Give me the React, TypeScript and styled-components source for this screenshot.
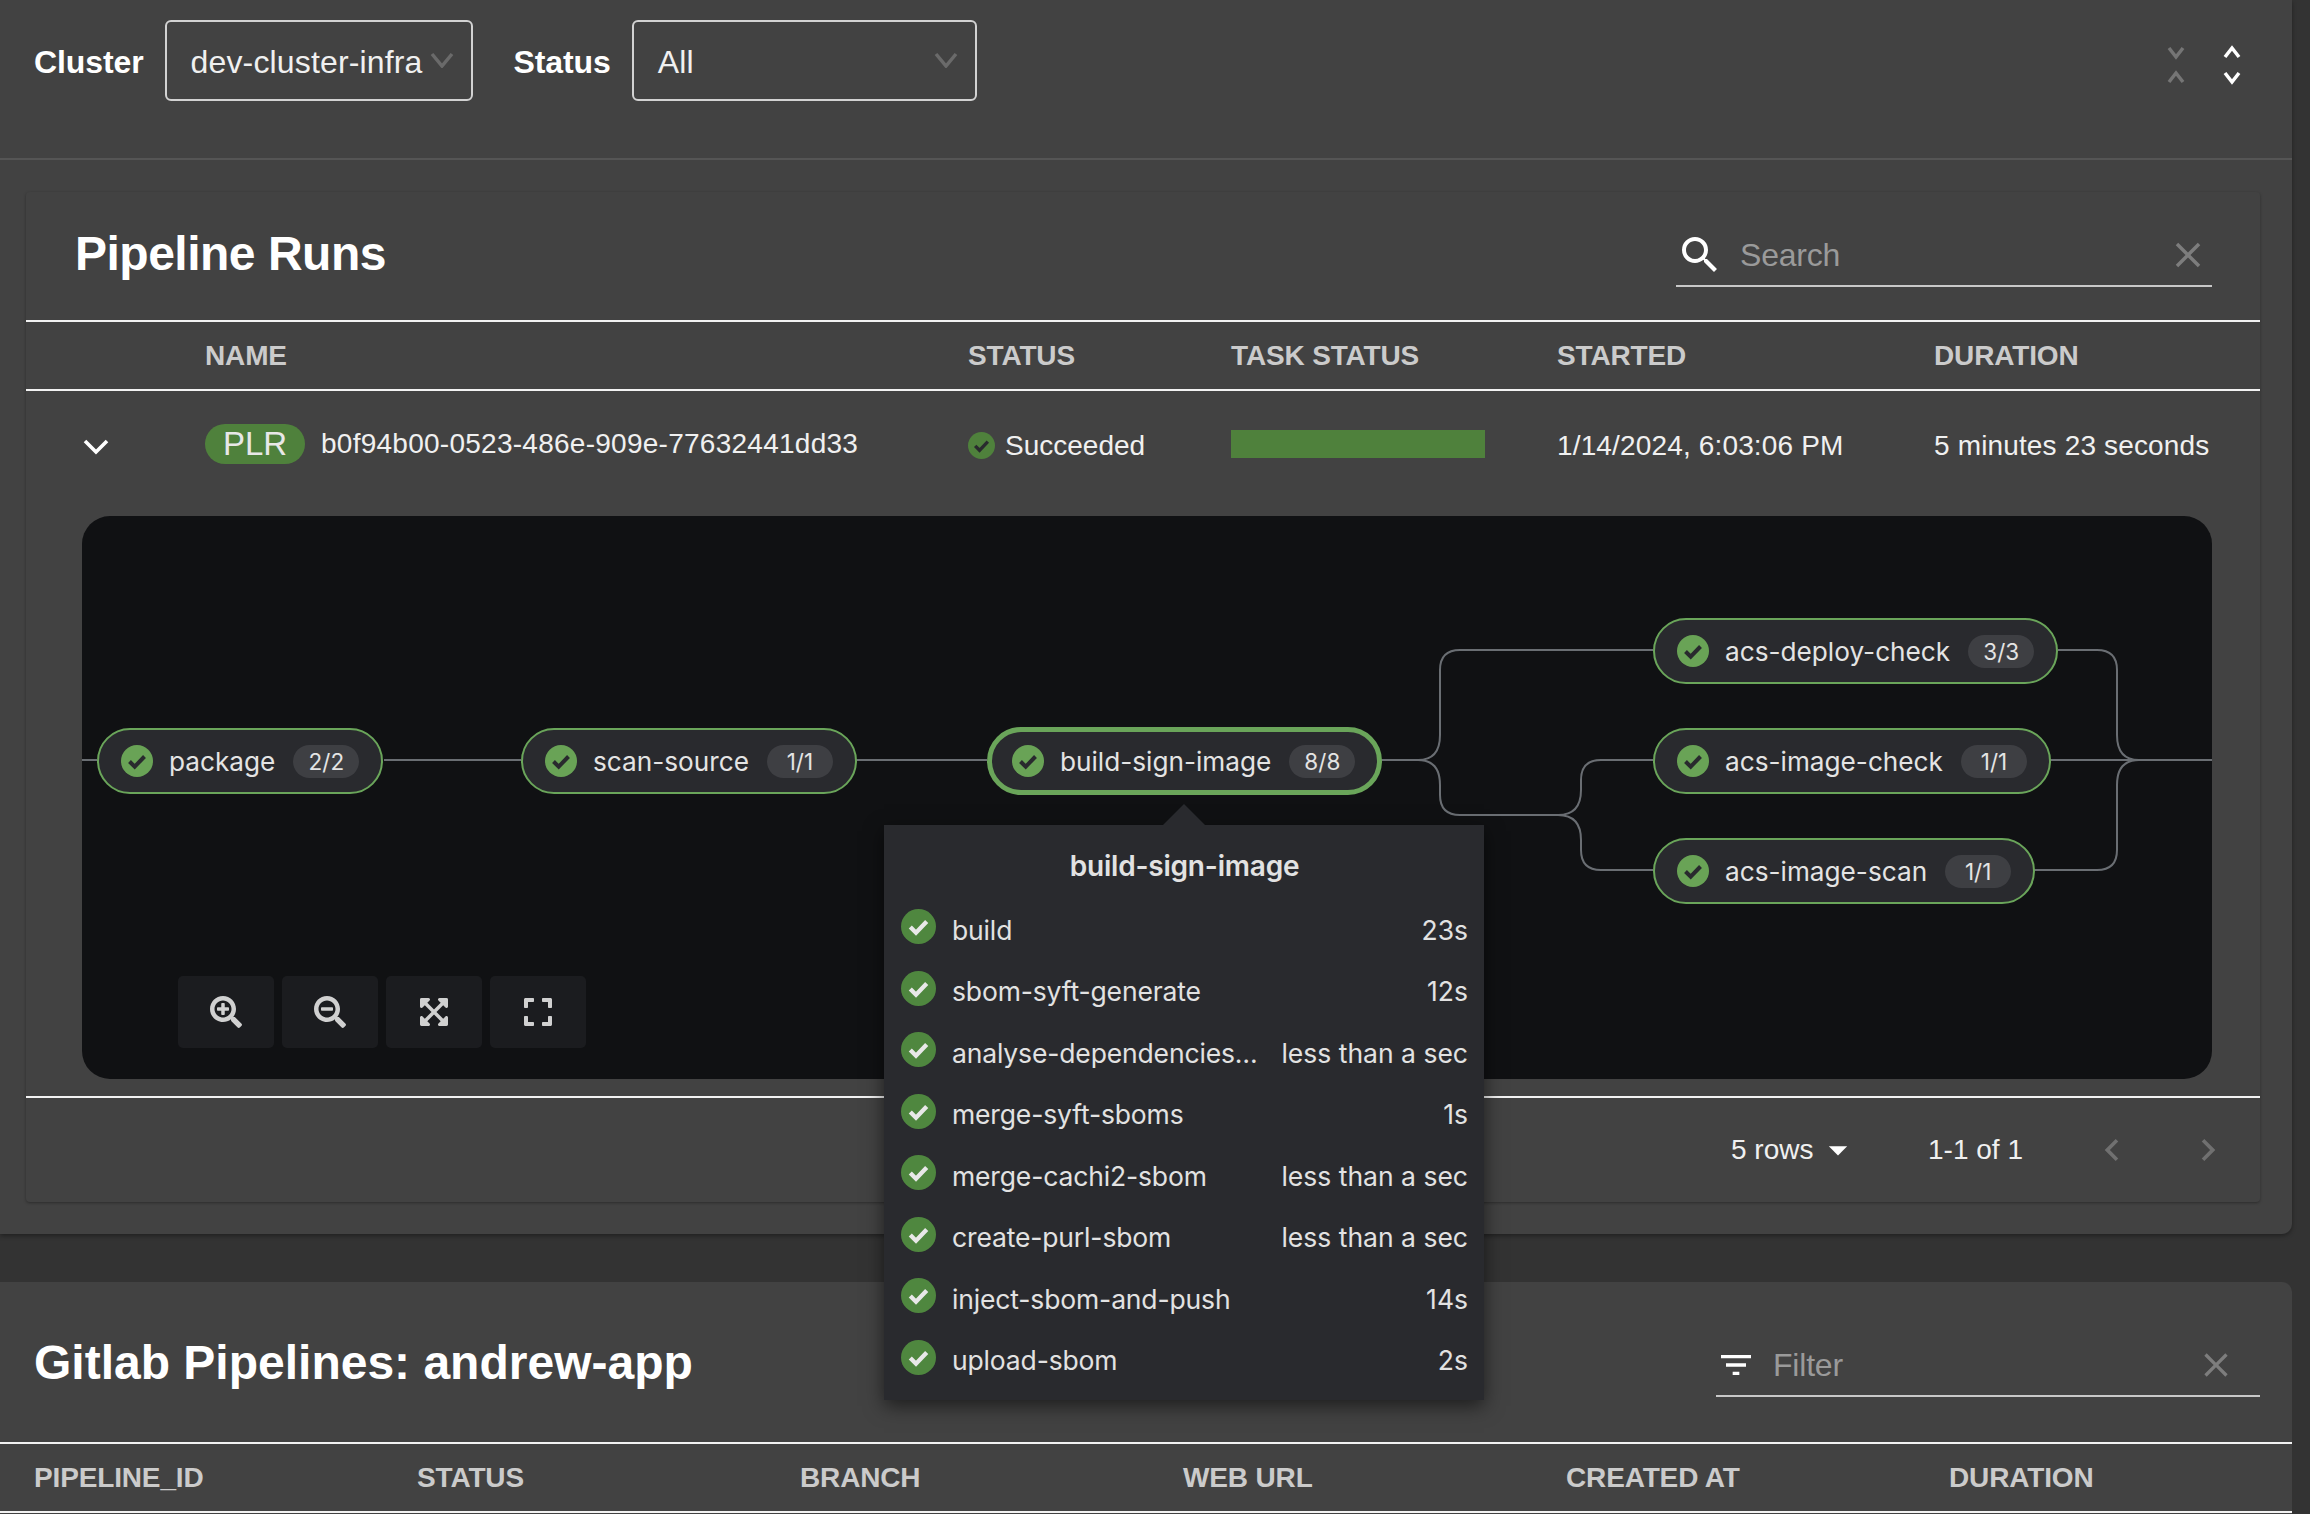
import React from "react"
import styled, { createGlobalStyle } from "styled-components"
import { FaExpand, FaExpandArrowsAlt, FaSearchMinus, FaSearchPlus } from "react-icons/fa"
import { MdArrowDropDown, MdChevronLeft, MdChevronRight, MdClear, MdFilterList, MdSearch } from "react-icons/md"

const GlobalStyle = createGlobalStyle`
html,body{margin:0;padding:0;background:#333333;}
*{box-sizing:border-box;}
`

const Page = styled.div`
width:2310px;
height:1514px;
overflow:hidden;
background:#333333;
font-family:"Liberation Sans",Arial,sans-serif;
color:#f0f0f0;
`

const Main = styled.div`
width:2292px;
height:1234px;
background:#424242;
border-radius:0 0 10px 0;
box-shadow:0 2px 4px rgba(0,0,0,.35);
`

const TopBar = styled.div`
height:160px;
padding:20px 34px 0;
display:flex;
align-items:flex-start;
border-bottom:2px solid #555555;
`

const FilterLabel = styled.label`
font-size:32px;
font-weight:700;
color:#fff;
line-height:84px;
margin-right:21px;
letter-spacing:-.1px;
`

const SelectBox = styled.div<{ $w: number; $mr?: number }>`
width:${p => p.$w}px;
height:81px;
margin-right:${p => p.$mr || 0}px;
border:2px solid #d2d2d2;
border-radius:6px;
padding:3px 24px 0;
display:flex;
align-items:center;
justify-content:space-between;
font-size:32px;
letter-spacing:.15px;
`

const Caret = styled.svg`
width:24px;
height:16px;
flex:none;
margin:-5px -7px 0 0;
`

const UnfoldGroup = styled.div`
margin-left:auto;
display:flex;
gap:38px;
padding:25px 17px 0 0;
`

const UnfoldIcon = styled.svg<{ $dim?: boolean }>`
width:18px;
height:40px;
color:${p => (p.$dim ? "#757575" : "#ffffff")};
`

const Card = styled.section`
width:2234px;
height:1010px;
margin:32px 0 0 26px;
box-shadow:0 1px 3px rgba(0,0,0,.35);
border-radius:4px;
`

const CardHead = styled.div`
height:130px;
padding:0 48px 0 49px;
display:flex;
align-items:center;
justify-content:space-between;
border-bottom:2px solid #f2f2f2;
`

const Title = styled.h2`
margin:0;
font-size:48px;
font-weight:700;
color:#fff;
`

const RunsTitle = styled(Title)`
letter-spacing:-.5px;
margin-bottom:5px;
`

const SearchField = styled.div<{ $w: number; $mt?: number }>`
width:${p => p.$w}px;
height:62px;
margin-top:${p => p.$mt || 0}px;
border-bottom:2px solid #c8c8c8;
display:flex;
align-items:center;
font-size:32px;
color:#9a9a9a;
`

const FieldText = styled.span<{ $ml: number }>`
flex:1;
margin-left:${p => p.$ml}px;
letter-spacing:-.2px;
`

const TableHead = styled.div`
display:grid;
grid-template-columns:179px 763px 263px 326px 377px 326px;
height:69px;
align-items:center;
border-bottom:2px solid #f2f2f2;
font-size:28px;
font-weight:700;
letter-spacing:-.15px;
color:#cbcbcb;
`

const TableRow = styled.div`
display:grid;
grid-template-columns:179px 763px 263px 326px 377px 326px;
height:125px;
padding-bottom:16px;
align-items:center;
font-size:28px;
letter-spacing:.15px;
color:#f0f0f0;
`

const RowChevron = styled.svg`
width:26px;
height:16px;
margin:2px 0 0 57px;
`

const NameCell = styled.div`
display:flex;
align-items:center;
gap:16px;
margin-top:-3px;
letter-spacing:.26px;
`

const PlrBadge = styled.span`
width:100px;
height:40px;
border-radius:20px;
background:#4f813c;
color:#e8e8e8;
font-size:33px;
letter-spacing:0;
display:flex;
align-items:center;
justify-content:center;
`

const StatusCell = styled.div`
display:flex;
align-items:center;
gap:10px;
letter-spacing:0;
`

const TaskBar = styled.div`
width:254px;
height:28px;
background:#4f813c;
margin-top:-3px;
`

const Graph = styled.div`
position:relative;
width:2130px;
height:563px;
margin-left:56px;
background:#101113;
border-radius:28px;
`

const Edges = styled.svg`
position:absolute;
inset:0;
width:100%;
height:100%;
`

const Node = styled.div<{ $x: number; $y: number; $active?: boolean }>`
position:absolute;
left:${p => p.$x}px;
top:${p => p.$y}px;
height:${p => (p.$active ? 68 : 66)}px;
padding:0 22px 0 ${p => (p.$active ? 20 : 22)}px;
display:flex;
align-items:center;
background:#292a2e;
border:${p => (p.$active ? "5px solid #6aa55a" : "2.5px solid #6aa55a")};
border-radius:34px;
font-family:Inter,"Liberation Sans",sans-serif;
font-size:26.2px;
color:#e4e4e4;
`

const NodeLabel = styled.span`
margin:0 18px 0 16px;
white-space:nowrap;
`

const NodeCount = styled.span`
width:66px;
height:33px;
border-radius:17px;
background:#3e3f43;
font-size:22.5px;
line-height:33px;
text-align:center;
color:#e4e4e4;
`

const ZoomBar = styled.div`
position:absolute;
left:96px;
top:460px;
display:flex;
gap:8px;
`

const ZoomButton = styled.div`
width:96px;
height:72px;
border-radius:5px;
background:#1b1c1f;
color:#d0d0d0;
font-size:32px;
display:flex;
align-items:center;
justify-content:center;
`

const Popover = styled.div`
position:absolute;
left:802px;
top:309px;
z-index:5;
width:600px;
height:575px;
padding:0 16px 0 17px;
background:#292a2e;
box-shadow:0 6px 18px rgba(0,0,0,.55);
font-family:Inter,"Liberation Sans",sans-serif;
font-size:26.5px;
color:#e2e2e2;
&::before{
  content:"";
  position:absolute;
  left:279px;
  top:-21px;
  border-left:21px solid transparent;
  border-right:21px solid transparent;
  border-bottom:21px solid #292a2e;
}
`

const PopTitle = styled.div`
height:74px;
padding-top:8px;
display:flex;
align-items:center;
justify-content:center;
font-size:28px;
font-weight:600;
letter-spacing:-.2px;
`

const PopRow = styled.div`
height:61.5px;
display:flex;
align-items:center;
`

const PopName = styled.span`
flex:1;
margin-left:16px;
white-space:nowrap;
letter-spacing:-.15px;
`

const PopTime = styled.span`
white-space:nowrap;
`

const PopIconWrap = styled.span`
display:flex;
margin:0 0 6px;
`

const CardFoot = styled.div`
height:106px;
margin-top:17px;
border-top:2px solid #f2f2f2;
display:flex;
align-items:center;
font-size:28px;
color:#f0f0f0;
padding-left:1705px;
`

const RowsPicker = styled.div`
display:flex;
align-items:center;
gap:3px;
flex:none;
width:197px;
font-size:28px;
`

const PageCount = styled.div`
flex:none;
width:162px;
`

const Pager = styled.div`
display:flex;
gap:52px;
color:#707070;
font-size:44px;
`

const SecondPanel = styled.section`
width:2292px;
height:240px;
margin-top:48px;
background:#424242;
border-radius:0 10px 0 0;
`

const SecondHead = styled.div`
height:162px;
padding:0 32px 0 34px;
display:flex;
align-items:center;
justify-content:space-between;
border-bottom:2px solid #f2f2f2;
`

const SecondTable = styled.div`
height:69px;
padding-left:34px;
display:grid;
grid-template-columns:repeat(6,383px);
align-items:center;
border-bottom:2px solid #f2f2f2;
font-size:28px;
font-weight:700;
letter-spacing:-.15px;
color:#cbcbcb;
`

interface CheckProps {
  size: number
  fill: string
  mark: string
}

const CheckIcon: React.FC<CheckProps> = ({ size, fill, mark }) => (
  <svg width={size} height={size} viewBox="0 0 32 32" style={{ flex: "none" }}>
    <circle cx="16" cy="16" r="16" fill={fill} />
    <path d="M8.5 16.5l5.2 5.2L23.5 11.5" fill="none" stroke={mark} strokeWidth="4" />
  </svg>
)

const nodes = [
  { label: "package", count: "2/2", x: 15, y: 212 },
  { label: "scan-source", count: "1/1", x: 439, y: 212 },
  { label: "build-sign-image", count: "8/8", x: 905, y: 211, active: true },
  { label: "acs-deploy-check", count: "3/3", x: 1571, y: 102 },
  { label: "acs-image-check", count: "1/1", x: 1571, y: 212 },
  { label: "acs-image-scan", count: "1/1", x: 1571, y: 322 },
]

const tasks = [
  ["build", "23s"],
  ["sbom-syft-generate", "12s"],
  ["analyse-dependencies…", "less than a sec"],
  ["merge-syft-sboms", "1s"],
  ["merge-cachi2-sbom", "less than a sec"],
  ["create-purl-sbom", "less than a sec"],
  ["inject-sbom-and-push", "14s"],
  ["upload-sbom", "2s"],
]

const edgePaths = [
  "M82 760H97",
  "M384 760H521",
  "M856 760H987",
  "M1379 760H1418Q1440 760 1440 735V670Q1440 650 1460 650H1653",
  "M1418 760Q1440 760 1440 785V795Q1440 815 1460 815H1558Q1581 815 1581 790V780Q1581 760 1601 760H1653",
  "M1558 815Q1581 815 1581 840V850Q1581 870 1601 870H1653",
  "M2058 650H2097Q2117 650 2117 670V735Q2117 760 2139 760H2212",
  "M2050 760H2139",
  "M2034 870H2097Q2117 870 2117 850V785Q2117 760 2139 760",
]

export default function App() {
  return (
    <Page>
      <GlobalStyle />
      <Main>
        <TopBar>
          <FilterLabel>Cluster</FilterLabel>
          <SelectBox $w={308} $mr={41}>
            dev-cluster-infra
            <Caret viewBox="0 0 24 16"><path d="M2 2l10 12L22 2" fill="none" stroke="#6a6a6a" strokeWidth="3.5" /></Caret>
          </SelectBox>
          <FilterLabel>Status</FilterLabel>
          <SelectBox $w={345}>
            All
            <Caret viewBox="0 0 24 16"><path d="M2 2l10 12L22 2" fill="none" stroke="#6a6a6a" strokeWidth="3.5" /></Caret>
          </SelectBox>
          <UnfoldGroup>
            <UnfoldIcon $dim viewBox="0 0 18 40">
              <path d="M2 3l7 9 7-9M2 37l7-9 7 9" fill="none" stroke="currentColor" strokeWidth="3.5" />
            </UnfoldIcon>
            <UnfoldIcon viewBox="0 0 18 40">
              <path d="M2 12l7-9 7 9M2 28l7 9 7-9" fill="none" stroke="currentColor" strokeWidth="3.5" />
            </UnfoldIcon>
          </UnfoldGroup>
        </TopBar>

        <Card>
          <CardHead>
            <RunsTitle>Pipeline Runs</RunsTitle>
            <SearchField $w={536}>
              <MdSearch size={48} color="#ffffff" />
              <FieldText $ml={16}>Search</FieldText>
              <MdClear size={42} color="#7d7d7d" style={{ marginRight: 3 }} />
            </SearchField>
          </CardHead>
          <TableHead>
            <span />
            <span>NAME</span>
            <span>STATUS</span>
            <span>TASK STATUS</span>
            <span>STARTED</span>
            <span>DURATION</span>
          </TableHead>
          <TableRow>
            <RowChevron viewBox="0 0 26 16">
              <path d="M2 2l11 11L24 2" fill="none" stroke="#ffffff" strokeWidth="3.6" />
            </RowChevron>
            <NameCell>
              <PlrBadge>PLR</PlrBadge>
              b0f94b00-0523-486e-909e-77632441dd33
            </NameCell>
            <StatusCell>
              <CheckIcon size={27} fill="#4f813c" mark="#292a2e" />
              Succeeded
            </StatusCell>
            <TaskBar />
            <span>1/14/2024, 6:03:06 PM</span>
            <span>5 minutes 23 seconds</span>
          </TableRow>
          <Graph>
            <Edges viewBox="82 516 2130 563">
              {edgePaths.map(d => (
                <path key={d} d={d} fill="none" stroke="#6a6e73" strokeWidth="2" />
              ))}
            </Edges>
            {nodes.map(n => (
              <Node key={n.label} $x={n.x} $y={n.y} $active={n.active}>
                <CheckIcon size={32} fill="#69a356" mark="#292a2e" />
                <NodeLabel>{n.label}</NodeLabel>
                <NodeCount>{n.count}</NodeCount>
              </Node>
            ))}
            <ZoomBar>
              <ZoomButton><FaSearchPlus /></ZoomButton>
              <ZoomButton><FaSearchMinus /></ZoomButton>
              <ZoomButton><FaExpandArrowsAlt /></ZoomButton>
              <ZoomButton><FaExpand /></ZoomButton>
            </ZoomBar>
            <Popover>
              <PopTitle>build-sign-image</PopTitle>
              {tasks.map(([name, time]) => (
                <PopRow key={name}>
                  <PopIconWrap><CheckIcon size={35} fill="#4f873f" mark="#e8e8e8" /></PopIconWrap>
                  <PopName>{name}</PopName>
                  <PopTime>{time}</PopTime>
                </PopRow>
              ))}
            </Popover>
          </Graph>
          <CardFoot>
            <RowsPicker>5 rows<MdArrowDropDown size={44} color="#ffffff" /></RowsPicker>
            <PageCount>1-1 of 1</PageCount>
            <Pager>
              <MdChevronLeft />
              <MdChevronRight />
            </Pager>
          </CardFoot>
        </Card>
      </Main>

      <SecondPanel>
        <SecondHead>
          <Title>Gitlab Pipelines: andrew-app</Title>
          <SearchField $w={544} $mt={8}>
            <MdFilterList size={40} color="#ffffff" />
            <FieldText $ml={17}>Filter</FieldText>
            <MdClear size={40} color="#7d7d7d" style={{ marginRight: 24 }} />
          </SearchField>
        </SecondHead>
        <SecondTable>
          <span>PIPELINE_ID</span>
          <span>STATUS</span>
          <span>BRANCH</span>
          <span>WEB URL</span>
          <span>CREATED AT</span>
          <span>DURATION</span>
        </SecondTable>
      </SecondPanel>
    </Page>
  )
}
